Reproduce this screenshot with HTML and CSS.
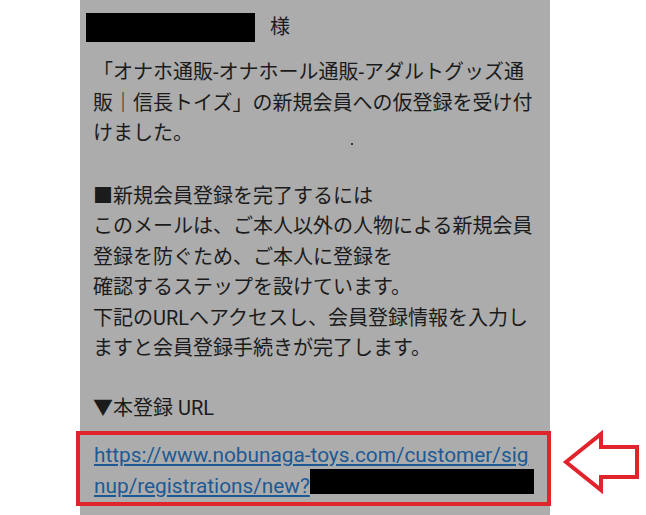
FILE: index.html
```html
<!DOCTYPE html>
<html lang="ja">
<head>
<meta charset="UTF-8">
<meta name="viewport" content="width=device-width, initial-scale=1.0">
<title>仮登録メール</title>
<link rel="stylesheet" href="styles.css">
</head>
<body>

<div class="screen">
  <div class="mail">
    <div class="greet">
      <span class="redact name"></span>
      <span class="sama">様</span>
    </div>

    <p class="para first">「オナホ通販-オナホール通販-アダルトグッズ通販｜信長トイズ」の新規会員への仮登録を受け付けました。<span class="speck"></span></p>

    <p class="para">■新規会員登録を完了するには<br>このメールは、ご本人以外の人物による新規会員登録を防ぐため、ご本人に登録を<br>確認するステップを設けています。<br>下記のURLへアクセスし、会員登録情報を入力しますと会員登録手続きが完了します。</p>

    <p class="para url-title">▼本登録 URL</p>

    <div class="url-box">
      <a class="url" href="#">https://www.nobunaga-toys.com/customer/signup/registrations/new?</a><span class="redact token"></span>
    </div>
  </div>

  <svg class="arrow" width="84" height="68" viewBox="0 0 84 68">
    <polygon points="6,34 41,6 41,19 77,19 77,49 41,49 41,62" fill="none" stroke="#e1232b" stroke-width="4" stroke-linejoin="miter"/>
  </svg>
</div>

</body>
</html>
```

FILE: styles.css
```css
body {
  margin: 0;
  background: #fff;
  font-family: Roboto, "Noto Sans CJK JP", sans-serif;
  color: #1b1b1b;
}

.screen {
  position: relative;
  width: 646px;
  height: 515px;
  overflow: hidden;
}

.mail {
  margin-left: 80px;
  width: 470px;
  height: 515px;
  box-sizing: border-box;
  padding: 12px 13px 0 13px;
  background: #acacac;
  font-size: 20px;
  line-height: 30.5px;
}

.greet {
  display: flex;
  align-items: center;
  height: 30px;
}

.redact {
  display: inline-block;
  background: #000;
}

.name {
  width: 169px;
  height: 29px;
  margin-left: -7px;
}

.sama {
  margin-left: 15px;
}

.para {
  margin: 32px 0 0;
}

.para.first {
  margin-top: 15px;
}

.para.url-title {
  margin-top: 29px;
}

.speck {
  display: inline-block;
  width: 2px;
  height: 2px;
  margin-left: 158px;
  background: #333;
  vertical-align: -5px;
}

.url-box {
  margin: 8px -14px 0 -17px;
  padding: 7px 8px 2px 14px;
  border: 4px solid #e1232b;
  font-size: 20.8px;
  line-height: 27px;
  word-break: break-all;
}

.url {
  color: #1c5a96;
  text-decoration: underline;
}

.token {
  width: 224px;
  height: 25px;
  vertical-align: -1px;
}

.arrow {
  position: absolute;
  left: 560px;
  top: 428px;
}
```
